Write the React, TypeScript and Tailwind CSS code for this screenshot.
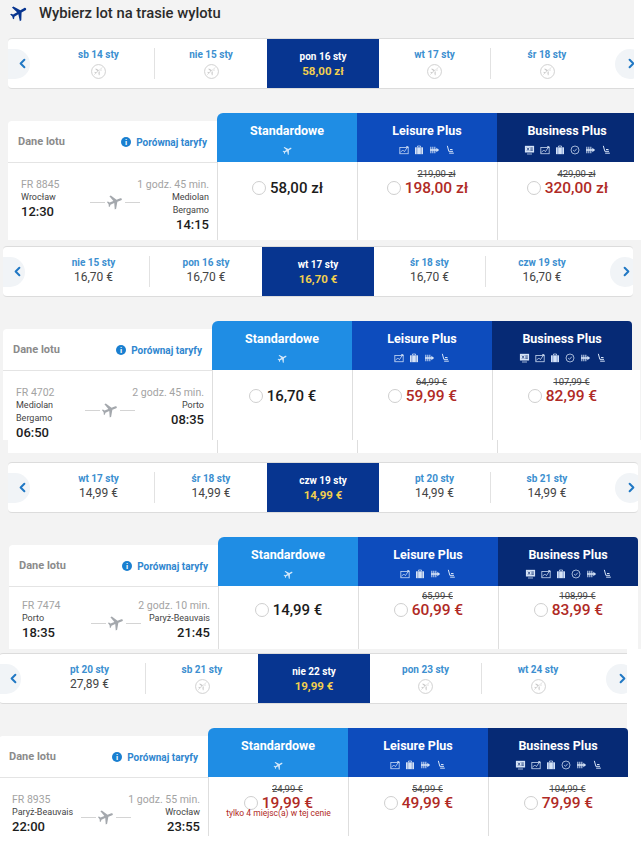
import type { ReactNode } from "react";
import { ChevronLeft, ChevronRight } from "lucide-react";

const FLIGHT =
  "M21 16v-2l-8-5V3.5c0-.83-.67-1.5-1.5-1.5S10 2.67 10 3.5V9l-8 5v2l8-2.5V19l-2 1.5V22l3.5-1 3.5 1v-1.5L13 19v-5.5l8 2.5z";

const Plane = ({ className }: { className: string }) => (
  <svg viewBox="0 0 24 24" className={className} fill="currentColor">
    <path d={FLIGHT} />
  </svg>
);

const NoFlight = () => (
  <svg viewBox="0 0 16 16" className="w-[15px] h-[15px] mt-[3px] text-[#c9c9c9]">
    <circle cx="8" cy="8" r="7.4" fill="#fff" stroke="currentColor" strokeWidth="0.9" />
    <g transform="translate(3 3) scale(0.42) rotate(60 12 12)">
      <path d={FLIGHT} fill="currentColor" />
    </g>
    <path d="M3.4 12.2 12.6 3.8" stroke="#fff" strokeWidth="1.6" />
    <path d="M3.4 11.4 12.2 3.6" stroke="currentColor" strokeWidth="0.6" />
  </svg>
);

const Tiny = ({ children, w = 10 }: { children: ReactNode; w?: number }) => (
  <svg
    viewBox="0 0 12 12"
    width={w}
    height={10}
    fill="none"
    stroke="currentColor"
    strokeWidth="0.9"
    className="text-[#d5e3f7]"
  >
    {children}
  </svg>
);

const ScreenIcon = () => (
  <Tiny w={11}>
    <rect x="0.5" y="1" width="11" height="8" fill="currentColor" stroke="none" />
    <path d="M3 3.2 5.5 6.8M5.5 3.2 3 6.8M7 3.5h3M7 5h3M7 6.5h3" stroke="#0a2a70" strokeWidth="0.8" />
    <path d="M3 10.8h6" />
  </Tiny>
);
const MapIcon = () => (
  <Tiny>
    <rect x="1" y="3" width="10" height="7.5" />
    <path d="M1.5 9 4.5 6 6.5 8 10.5 2M8.6 1.8h2.1v2" />
  </Tiny>
);
const BagIcon = () => (
  <Tiny>
    <rect x="1.2" y="2.8" width="9.6" height="8.2" fill="currentColor" stroke="none" />
    <path d="M4.2 2.8V1.2h3.6v1.6" />
    <path d="M3.4 2.8V11M8.6 2.8V11" stroke="#0e3c9e" strokeWidth="0.5" />
  </Tiny>
);
const ClockIcon = () => (
  <Tiny>
    <circle cx="6" cy="6" r="4.8" />
    <path d="M3.8 6.2 5.4 7.6 8.2 4.4" />
  </Tiny>
);
const SeatsIcon = () => (
  <Tiny w={11}>
    <path
      d="M1 2h1.2v8H1zM3.4 2h1.2v8H3.4zM5.8 2h1.2v8H5.8zM0.6 5h7.6V3.2L11.6 6 8.2 8.8V7H0.6z"
      fill="currentColor"
      stroke="none"
    />
  </Tiny>
);
const SeatIcon = () => (
  <Tiny>
    <path d="M2.8 1 4.6 7.6h5M5 9.8h5.6M6 5.4h3" strokeWidth="1.2" />
  </Tiny>
);

const LEISURE = [MapIcon, BagIcon, SeatsIcon, SeatIcon];
const BUSINESS = [ScreenIcon, MapIcon, BagIcon, ClockIcon, SeatsIcon, SeatIcon];

type Day = { label: string; price?: string; active?: boolean };

const DayCell = ({ day, divider }: { day: Day; divider: boolean }) => (
  <div
    className={
      day.active
        ? "w-[112px] shrink-0 h-full bg-[#073590] flex flex-col items-center pt-[11px]"
        : "w-[112px] shrink-0 h-full flex items-center"
    }
  >
    {day.active ? (
      <>
        <span className="text-[10px] leading-[13px] font-bold text-white">{day.label}</span>
        <span className="text-[11.5px] leading-[16px] font-bold text-[#f1cf4f]">{day.price}</span>
      </>
    ) : (
      <div className={divider ? "w-full h-[31px] border-r border-[#e2e2e2] flex flex-col items-center" : "w-full h-[31px] flex flex-col items-center"}>
        <span className="text-[10px] leading-[13px] font-bold text-[#3c8fd0]">{day.label}</span>
        {day.price ? (
          <span className="text-[12px] leading-[16px] text-[#444]">{day.price}</span>
        ) : (
          <NoFlight />
        )}
      </div>
    )}
  </div>
);

const Strip = ({ days, className }: { days: Day[]; className: string }) => (
  <div className={`h-[51px] bg-white border-y border-[#dcdcdc] rounded-l-[4px] overflow-hidden flex items-center ${className}`}>
    <div className="w-[35px] shrink-0 flex items-center">
      <div className="w-[22px] h-[30px] bg-[#f1f4f7] rounded-r-full flex items-center justify-end">
        <ChevronLeft className="w-[15px] h-[15px] text-[#2178c4]" strokeWidth={3.2} />
      </div>
    </div>
    {days.map((d, i) => (
      <DayCell key={d.label} day={d} divider={i === 0 || i === 3} />
    ))}
    <div className="ml-[12px] w-[30px] h-[30px] shrink-0 bg-[#f1f4f7] rounded-full flex items-center pl-[9px]">
      <ChevronRight className="w-[15px] h-[15px] text-[#2178c4]" strokeWidth={3.2} />
    </div>
  </div>
);

const FareHead = ({
  name,
  bg,
  icons,
  round,
}: {
  name: string;
  bg: string;
  icons: (() => ReactNode)[] | null;
  round?: string;
}) => (
  <div className={`h-[49px] ${bg} ${round ?? ""} flex flex-col items-center pt-[9px]`}>
    <span className="text-[12.5px] leading-[17px] font-bold text-white">{name}</span>
    <div className="flex gap-[5px] mt-[6px] h-[10px] items-center">
      {icons ? (
        icons.map((Icon, i) => <Icon key={i} />)
      ) : (
        <Plane className="w-[11px] h-[11px] text-[#d5e8fa] rotate-[60deg]" />
      )}
    </div>
  </div>
);

type Fare = { old?: string; price: string; note?: string };

const FareBody = ({ fare, red, pt }: { fare: Fare; red: boolean; pt: string }) => (
  <div className={`flex-1 bg-white border-l border-[#dedede] flex flex-col items-center ${pt}`}>
    <div className="flex items-end gap-[4px]">
      <div className="w-[14px] h-[14px] rounded-full border border-[#cfcfcf] bg-white mb-[1px]" />
      <div className="flex flex-col items-center">
        <span className={fare.old ? "text-[9.5px] leading-[12px] text-[#444] line-through" : "h-[12px]"}>{fare.old}</span>
        <span className={red ? "text-[15.5px] leading-[16px] font-medium text-[#b02a25]" : "text-[15px] leading-[16px] font-medium text-[#1c1c1c]"}>
          {fare.price}
        </span>
      </div>
    </div>
    {fare.note && <span className="text-[8.5px] leading-[4px] text-[#b02a25] whitespace-nowrap">{fare.note}</span>}
  </div>
);

type Flight = {
  no: string;
  dur: string;
  from: string[];
  to: string[];
  dep: string;
  arr: string;
  fares: Fare[];
};

const Card = ({
  f,
  className,
  bizRound,
  infoPt = "pt-[15px]",
  farePt = "pt-[6px]",
}: {
  f: Flight;
  className: string;
  bizRound?: string;
  infoPt?: string;
  farePt?: string;
}) => (
  <div className={`flex ${className}`}>
    <div className="w-[209px] shrink-0 mt-[8px] bg-white rounded-tl-[4px] flex flex-col">
      <div className="h-[42px] border-b border-[#e4e4e4] flex items-center justify-between pl-[10px] pr-[10px] pt-[1px]">
        <span className="text-[11px] font-bold text-[#8b8b8b]">Dane lotu</span>
        <div className="flex items-center gap-[5px]">
          <span className="w-[10.5px] h-[10.5px] rounded-full bg-[#1a7fd0] text-white text-[8px] leading-[11px] font-bold text-center">i</span>
          <span className="text-[10px] font-bold text-[#2f86cf]">Porównaj taryfy</span>
        </div>
      </div>
      <div className={`flex pl-[13px] pr-[8px] ${infoPt}`}>
        <div className="w-[69px] shrink-0 flex flex-col">
          <span className="text-[10.5px] leading-[13px] text-[#a3a3a3]">{f.no}</span>
          {f.from.map((t) => (
            <span key={t} className="text-[9px] leading-[13px] text-[#444] whitespace-nowrap">{t}</span>
          ))}
          <span className="text-[13px] leading-[15px] font-medium text-[#1c1c1c]">{f.dep}</span>
        </div>
        <div className="w-[50px] shrink-0 flex items-center gap-[1px] mt-[14px] h-[20px]">
          <span className="w-[15px] h-px bg-[#d4d4d4]" />
          <Plane className="w-[18px] h-[18px] shrink-0 text-[#a4a8ad] rotate-[68deg]" />
          <span className="w-[15px] h-px bg-[#d4d4d4]" />
        </div>
        <div className="w-[69px] shrink-0 flex flex-col items-end">
          <span className="text-[10.5px] leading-[13px] text-[#a3a3a3] whitespace-nowrap">{f.dur}</span>
          {f.to.map((t) => (
            <span key={t} className="text-[9px] leading-[13px] text-[#444] whitespace-nowrap">{t}</span>
          ))}
          <span className="text-[13px] leading-[15px] font-medium text-[#1c1c1c]">{f.arr}</span>
        </div>
      </div>
    </div>
    <div className="w-[140px] shrink-0 flex flex-col">
      <FareHead name="Standardowe" bg="bg-[#1f8de4]" icons={null} round="rounded-tl-[6px]" />
      <FareBody fare={f.fares[0]} red={!!f.fares[0].old} pt={farePt} />
    </div>
    <div className="w-[140px] shrink-0 flex flex-col">
      <FareHead name="Leisure Plus" bg="bg-[#0d4cbd]" icons={LEISURE} />
      <FareBody fare={f.fares[1]} red pt={farePt} />
    </div>
    <div className="w-[140px] shrink-0 flex flex-col">
      <FareHead name="Business Plus" bg="bg-[#062a75]" icons={BUSINESS} round={bizRound} />
      <FareBody fare={f.fares[2]} red pt={farePt} />
    </div>
  </div>
);

export default function App() {
  return (
    <div className="w-[643px] h-[856px] bg-white overflow-hidden font-['Roboto',sans-serif]">
      <section className="w-[634px] bg-[#f3f3f3]">
        <div className="h-[38px] flex items-start pl-[9px] pt-[3px] gap-[10px]">
          <Plane className="w-[20px] h-[20px] text-[#073590] rotate-[60deg]" />
          <h1 className="text-[14.8px] leading-[20px] font-medium text-[#2b2b2b]">Wybierz lot na trasie wylotu</h1>
        </div>
        <Strip
          className="ml-[8px] w-[626px]"
          days={[
            { label: "sb 14 sty" },
            { label: "nie 15 sty" },
            { label: "pon 16 sty", price: "58,00 zł", active: true },
            { label: "wt 17 sty" },
            { label: "śr 18 sty" },
          ]}
        />
        <Card
          className="ml-[8px] w-[626px] h-[127px] mt-[24px] overflow-hidden"
          f={{
            no: "FR 8845",
            dur: "1 godz. 45 min.",
            from: ["Wrocław"],
            to: ["Mediolan", "Bergamo"],
            dep: "12:30",
            arr: "14:15",
            fares: [
              { price: "58,00 zł" },
              { old: "219,00 zł", price: "198,00 zł" },
              { old: "429,00 zł", price: "320,00 zł" },
            ],
          }}
        />
      </section>

      <section className="w-[641px] bg-[#f3f3f3] pt-[6px]">
        <Strip
          className="ml-[3px] w-[630px] rounded-r-[4px]"
          days={[
            { label: "nie 15 sty", price: "16,70 €" },
            { label: "pon 16 sty", price: "16,70 €" },
            { label: "wt 17 sty", price: "16,70 €", active: true },
            { label: "śr 18 sty", price: "16,70 €" },
            { label: "czw 19 sty", price: "16,70 €" },
          ]}
        />
        <div className="flex">
          <Card
            className="ml-[3px] w-[629px] h-[119px] mt-[24px]"
            bizRound="rounded-tr-[4px]"
            f={{
              no: "FR 4702",
              dur: "2 godz. 45 min.",
              from: ["Mediolan", "Bergamo"],
              to: ["Porto"],
              dep: "06:50",
              arr: "08:35",
              fares: [
                { price: "16,70 €" },
                { old: "64,99 €", price: "59,99 €" },
                { old: "107,99 €", price: "82,99 €" },
              ],
            }}
          />
          <div className="w-[8px] mt-[73px] bg-white" />
        </div>
        <div className="ml-[8px] h-[13px] flex bg-white">
          <div className="w-[209px]" />
          <div className="w-[140px] border-l border-[#dedede]" />
          <div className="w-[140px] border-l border-[#dedede]" />
          <div className="flex-1 border-l border-[#dedede]" />
        </div>
      </section>

      <section className="w-[641px] bg-[#f3f3f3] pt-[9px]">
        <Strip
          className="ml-[8px] w-[630px] rounded-r-[4px]"
          days={[
            { label: "wt 17 sty", price: "14,99 €" },
            { label: "śr 18 sty", price: "14,99 €" },
            { label: "czw 19 sty", price: "14,99 €", active: true },
            { label: "pt 20 sty", price: "14,99 €" },
            { label: "sb 21 sty", price: "14,99 €" },
          ]}
        />
        <Card
          className="ml-[9px] w-[629px] h-[112px] mt-[24px]"
          bizRound="rounded-tr-[4px]"
          infoPt="pt-[12px]"
          farePt="pt-[4px]"
          f={{
            no: "FR 7474",
            dur: "2 godz. 10 min.",
            from: ["Porto"],
            to: ["Paryż-Beauvais"],
            dep: "18:35",
            arr: "21:45",
            fares: [
              { price: "14,99 €" },
              { old: "65,99 €", price: "60,99 €" },
              { old: "108,99 €", price: "83,99 €" },
            ],
          }}
        />
      </section>

      <section className="w-[627px] bg-[#f3f3f3] pt-[4px]">
        <Strip
          className="ml-[-1px] w-[628px]"
          days={[
            { label: "pt 20 sty", price: "27,89 €" },
            { label: "sb 21 sty" },
            { label: "nie 22 sty", price: "19,99 €", active: true },
            { label: "pon 23 sty" },
            { label: "wt 24 sty" },
          ]}
        />
        <Card
          className="ml-[-1px] w-[629px] h-[108px] mt-[24px]"
          bizRound="rounded-tr-[4px]"
          f={{
            no: "FR 8935",
            dur: "1 godz. 55 min.",
            from: ["Paryż-Beauvais"],
            to: ["Wrocław"],
            dep: "22:00",
            arr: "23:55",
            fares: [
              { old: "24,99 €", price: "19,99 €", note: "tylko 4 miejsc(a) w tej cenie" },
              { old: "54,99 €", price: "49,99 €" },
              { old: "104,99 €", price: "79,99 €" },
            ],
          }}
        />
      </section>
    </div>
  );
}
